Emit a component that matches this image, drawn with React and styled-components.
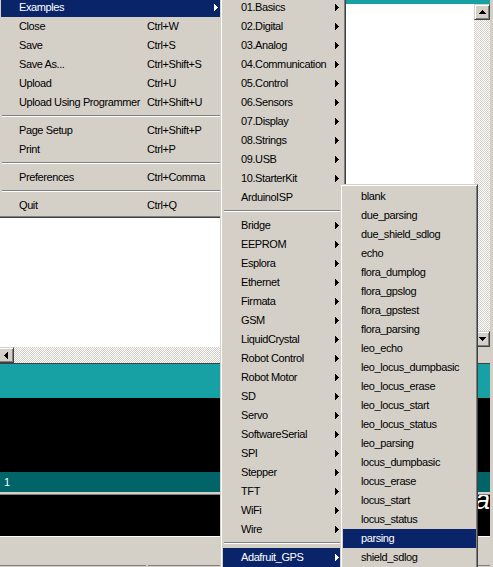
import React from 'react';
import styled, {createGlobalStyle} from 'styled-components';

const FACE = '#d4d0c8';
const SHADOW = '#808080';
const DARK = '#404040';
const SELECT = '#0a246a';

const fileItems = [
  {label: 'Examples', sub: true, active: true},
  {label: 'Close', keys: 'Ctrl+W'},
  {label: 'Save', keys: 'Ctrl+S'},
  {label: 'Save As...', keys: 'Ctrl+Shift+S'},
  {label: 'Upload', keys: 'Ctrl+U'},
  {label: 'Upload Using Programmer', keys: 'Ctrl+Shift+U'},
  {sep: true},
  {label: 'Page Setup', keys: 'Ctrl+Shift+P'},
  {label: 'Print', keys: 'Ctrl+P'},
  {sep: true},
  {label: 'Preferences', keys: 'Ctrl+Comma'},
  {sep: true},
  {label: 'Quit', keys: 'Ctrl+Q'},
];

const exampleItems = [
  '01.Basics', '02.Digital', '03.Analog', '04.Communication', '05.Control',
  '06.Sensors', '07.Display', '08.Strings', '09.USB', '10.StarterKit',
].map(label => ({label, sub: true}))
  .concat([{label: 'ArduinoISP'}, {sep: true}])
  .concat([
    'Bridge', 'EEPROM', 'Esplora', 'Ethernet', 'Firmata', 'GSM', 'LiquidCrystal',
    'Robot Control', 'Robot Motor', 'SD', 'Servo', 'SoftwareSerial', 'SPI',
    'Stepper', 'TFT', 'WiFi', 'Wire',
  ].map(label => ({label, sub: true})))
  .concat([{sep: true}, {label: 'Adafruit_GPS', sub: true, active: true}]);

const gpsItems = [
  'blank', 'due_parsing', 'due_shield_sdlog', 'echo', 'flora_dumplog',
  'flora_gpslog', 'flora_gpstest', 'flora_parsing', 'leo_echo',
  'leo_locus_dumpbasic', 'leo_locus_erase', 'leo_locus_start',
  'leo_locus_status', 'leo_parsing', 'locus_dumpbasic', 'locus_erase',
  'locus_start', 'locus_status', 'parsing', 'shield_sdlog',
].map(label => ({label, active: label === 'parsing'}));

function PixelArrow({dir, color}) {
  const paths = {
    right: 'M0 0h1v7H0zM1 1h1v5H1zM2 2h1v3H2zM3 3h1v1H3z',
    left: 'M3 0h1v7H3zM2 1h1v5H2zM1 2h1v3H1zM0 3h1v1H0z',
    up: 'M3 0h1v1H3zM2 1h3v1H2zM1 2h5v1H1zM0 3h7v1H0z',
    down: 'M0 0h7v1H0zM1 1h5v1H1zM2 2h3v1H2zM3 3h1v1H3z',
  };
  const wide = dir === 'up' || dir === 'down';
  return (
    <svg width={wide ? 7 : 4} height={wide ? 4 : 7} shapeRendering="crispEdges">
      <path d={paths[dir]} fill={color}/>
    </svg>
  );
}

function MenuList({items, labelWidth, ...rest}) {
  return (
    <Menu {...rest}>
      {items.map((item, i) => item.sep ? <Separator key={i}/> :
        <Item key={i} $active={item.active}>
          <Label $width={labelWidth}>{item.label}</Label>
          {item.keys ? <span>{item.keys}</span> : null}
          {item.sub ?
            <SubArrow>
              <PixelArrow dir="right" color={item.active ? '#fff' : '#000'}/>
            </SubArrow> : null}
        </Item>
      )}
    </Menu>
  );
}

export default function App() {
  return (
    <Screen>
      <GlobalStyle/>
      <Main>
        <TopStrip/>
        <EditorRow>
          <TextArea/>
          <VScroll>
            <ScrollButton><PixelArrow dir="up" color="#000"/></ScrollButton>
            <Track/>
            <ScrollButton><PixelArrow dir="down" color="#000"/></ScrollButton>
          </VScroll>
        </EditorRow>
        <HScroll>
          <ScrollButton $shift><PixelArrow dir="left" color="#000"/></ScrollButton>
          <Track/>
          <ScrollButton><PixelArrow dir="right" color="#000"/></ScrollButton>
          <Corner/>
        </HScroll>
        <Rule/>
        <Band $color="#17a1a5" $height={34}/>
        <Console $height={74}/>
        <LineStatus>1</LineStatus>
        <Splitter/>
        <Console $height={41}>
          <BigGlyph>a</BigGlyph>
        </Console>
        <Highlight/>
        <Filler/>
        <StatusBar>
          <Panel $w={146}/>
          <Panel $w={154}/>
          <Panel $w={153}/>
          <Panel/>
        </StatusBar>
      </Main>

      <MenuList items={fileItems} labelWidth={128} $top={-5} $left={-2} $width={227}/>
      <MenuList items={exampleItems} $top={-5} $left={220} $width={126}/>
      <MenuList items={gpsItems} $top={184} $left={340} $width={138}/>
    </Screen>
  );
}

const GlobalStyle = createGlobalStyle`
  body {
    margin: 0;
    overflow: hidden;
    font-family: "Liberation Sans", Arial, sans-serif;
    font-size: 11px;
  }
`;

const Screen = styled.div`
  position: relative;
  width: 493px;
  height: 567px;
  overflow: hidden;
  display: flex;
  background: ${FACE};
`;

const Main = styled.div`
  width: 490px;
  display: flex;
  flex-direction: column;
`;

const TopStrip = styled.div`
  height: 4px;
  background: #17a1a5;
`;

const EditorRow = styled.div`
  height: 343px;
  display: flex;
`;

const TextArea = styled.div`
  flex: 1;
  background: #fff;
`;

const VScroll = styled.div`
  width: 16px;
  display: flex;
  flex-direction: column;
`;

const HScroll = styled.div`
  height: 16px;
  display: flex;
`;

const ScrollButton = styled.div`
  box-sizing: border-box;
  flex: 0 0 16px;
  height: 16px;
  margin-left: ${p => p.$shift ? '-2px' : '0'};
  display: flex;
  align-items: center;
  justify-content: center;
  background: ${FACE};
  border: 1px solid;
  border-color: ${FACE} ${DARK} ${DARK} ${FACE};
  box-shadow: inset 1px 1px #fff, inset -1px -1px ${SHADOW};
`;

const Track = styled.div`
  flex: 1;
  background: repeating-conic-gradient(#fff 0 25%, ${FACE} 0 50%) 0 0 / 2px 2px;
`;

const Corner = styled.div`
  flex: 0 0 16px;
  background: ${FACE};
`;

const Rule = styled.div`
  height: 1px;
  background: ${DARK};
`;

const Band = styled.div`
  height: ${p => p.$height}px;
  background: ${p => p.$color};
`;

const Console = styled.div`
  height: ${p => p.$height}px;
  background: #000;
  display: flex;
  justify-content: flex-end;
  align-items: flex-start;
  overflow: hidden;
`;

const BigGlyph = styled.span`
  margin-top: -8px;
  color: #fff;
  font-size: 27px;
  font-style: italic;
  line-height: 1;
`;

const LineStatus = styled.div`
  height: 20px;
  line-height: 20px;
  padding-left: 4px;
  background: #006468;
  color: #fff;
`;

const Splitter = styled.div`
  height: 2px;
  background: ${FACE};
  border-bottom: 1px solid ${SHADOW};
`;

const Highlight = styled.div`
  height: 1px;
  background: #fff;
`;

const Filler = styled.div`
  flex: 1;
`;

const StatusBar = styled.div`
  height: 2px;
  display: flex;
  gap: 2px;
`;

const Panel = styled.div`
  flex: ${p => p.$w ? `0 0 ${p.$w}px` : '1'};
  border-top: 1px solid ${SHADOW};
`;

const Menu = styled.div`
  position: absolute;
  top: ${p => p.$top}px;
  left: ${p => p.$left}px;
  width: ${p => p.$width}px;
  box-sizing: border-box;
  padding: 2px 1px 2px 2px;
  background: ${FACE};
  border: 1px solid;
  border-color: ${FACE} ${DARK} ${DARK} ${FACE};
  box-shadow: inset 1px 1px #fff, inset -1px -1px ${SHADOW};
  letter-spacing: -0.4px;
`;

const Item = styled.div`
  display: flex;
  align-items: center;
  height: 19px;
  line-height: 19px;
  padding-left: 18px;
  white-space: nowrap;
  background: ${p => p.$active ? SELECT : 'transparent'};
  color: ${p => p.$active ? '#fff' : '#000'};
`;

const Label = styled.span`
  flex: 0 0 ${p => p.$width ? `${p.$width}px` : 'auto'};
`;

const SubArrow = styled.span`
  display: flex;
  margin-left: auto;
  margin-right: 5px;
`;

const Separator = styled.div`
  height: 9px;
  box-sizing: border-box;
  padding: 3px 1px 0;

  &::before {
    content: '';
    display: block;
    border-top: 1px solid ${SHADOW};
    border-bottom: 1px solid #fff;
  }
`;
